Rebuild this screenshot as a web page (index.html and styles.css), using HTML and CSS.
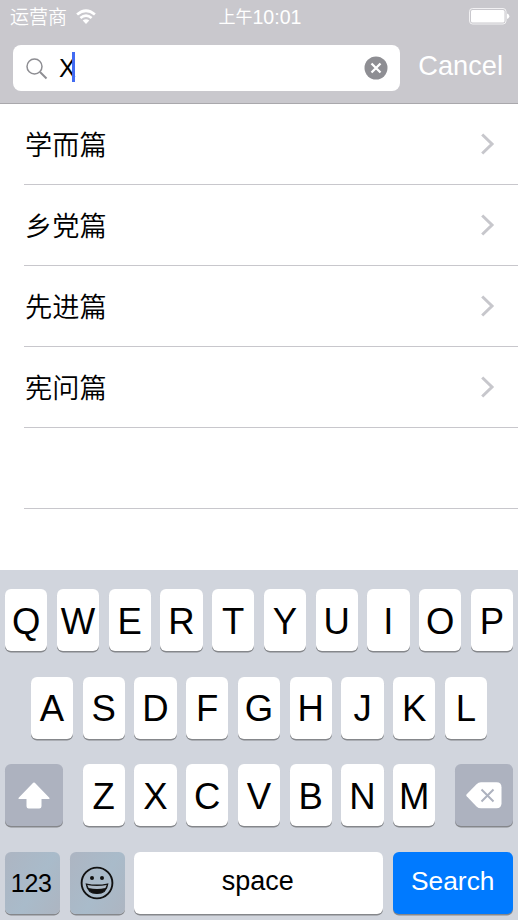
FILE: index.html
```html
<!DOCTYPE html>
<html lang="zh-CN">
<head>
<meta charset="utf-8">
<title>论语</title>
<link rel="stylesheet" href="styles.css">
</head>
<body>
<main class="phone">
  <header class="header">
    <div class="status">
      <div class="carrier"><span>运营商</span>
        <svg class="wifi" width="20" height="16" viewBox="0 0 20 16"><path d="M1.1 5.6Q10-2.1 18.9 5.6M4.4 9Q10 4.2 15.6 9" fill="none" stroke="#fff" stroke-width="2.7"/><path d="M6.700 11.500Q10 8.800 13.300 11.500L10 15Z" fill="#fff"/></svg>
      </div>
      <div class="time"><span class="meridiem">上午</span>10:01</div>
      <svg class="battery" width="41" height="17" viewBox="0 0 41 17"><rect x=".5" y=".5" width="36.500" height="15.500" rx="3" fill="none" stroke="#fff" stroke-opacity=".75"/><rect x="2" y="2" width="33.500" height="12.500" rx="1.500" fill="#fff"/><path d="M38 5.500q2.300.7 2.300 2.800T38 11Z" fill="#fff"/></svg>
    </div>
    <div class="search-row">
      <div class="field">
        <svg class="glass" width="22" height="22" viewBox="0 0 22 22" fill="none" stroke="#8e8e93"><circle cx="8.500" cy="8.500" r="7.500" stroke-width="1.500"/><path d="M14 14l6.500 6.500" stroke-width="2"/></svg>
        <span class="query">X</span><i class="caret"></i>
        <svg class="clear" width="24" height="24" viewBox="0 0 24 24"><circle cx="12" cy="12" r="11.500" fill="#8e8e93"/><path d="M7.500 7.500l9 9M16.500 7.500l-9 9" stroke="#fff" stroke-width="2.300"/></svg>
      </div>
      <span class="cancel">Cancel</span>
    </div>
  </header>
  <ul class="list">
    <li class="row"><span>学而篇</span><svg class="chevron" width="14" height="22" viewBox="0 0 14 22"><path d="M1.200 1.500L11 11l-9.800 9.500"/></svg></li>
    <li class="row"><span>乡党篇</span><svg class="chevron" width="14" height="22" viewBox="0 0 14 22"><path d="M1.200 1.500L11 11l-9.800 9.500"/></svg></li>
    <li class="row"><span>先进篇</span><svg class="chevron" width="14" height="22" viewBox="0 0 14 22"><path d="M1.200 1.500L11 11l-9.800 9.500"/></svg></li>
    <li class="row"><span>宪问篇</span><svg class="chevron" width="14" height="22" viewBox="0 0 14 22"><path d="M1.200 1.500L11 11l-9.800 9.500"/></svg></li>
    <li class="row"></li>
  </ul>
  <section class="keyboard">
    <div class="keys">
      <b class="key">Q</b><b class="key">W</b><b class="key">E</b><b class="key">R</b><b class="key">T</b><b class="key">Y</b><b class="key">U</b><b class="key">I</b><b class="key">O</b><b class="key">P</b>
    </div>
    <div class="keys">
      <b class="key">A</b><b class="key">S</b><b class="key">D</b><b class="key">F</b><b class="key">G</b><b class="key">H</b><b class="key">J</b><b class="key">K</b><b class="key">L</b>
    </div>
    <div class="keys keys-wide">
      <b class="key dark"><svg width="32" height="27" viewBox="0 0 32 27"><path d="M15.200.8q.8-.8 1.600 0L31.300 15.800q.9 1.200-.5 1.200H23.500v7.300q0 2.200-2.200 2.200H10.700Q8.500 26.500 8.500 24.300v-7.300H1.200q-1.400 0-.5-1.200Z" fill="#fff"/></svg></b>
      <div class="letters"><b class="key">Z</b><b class="key">X</b><b class="key">C</b><b class="key">V</b><b class="key">B</b><b class="key">N</b><b class="key">M</b></div>
      <b class="key dark"><svg width="36" height="27" viewBox="0 0 36 27"><path d="M.7 12.300L10.500 2.200Q12.400.3 15 .3h15.500q5 0 5 5v16q0 5-5 5H15q-2.600 0-4.500-1.900L.7 14.300q-.9-1 0-2Z" fill="#fff"/><path d="M15.500 7.500l12 12M27.500 7.500l-12 12" stroke="#adb2bf" stroke-width="2"/></svg></b>
    </div>
    <div class="keys">
      <b class="key small tint numbers">123</b>
      <b class="key small tint"><svg width="34" height="34" viewBox="0 0 34 34"><circle cx="17" cy="17" r="15.400" fill="none" stroke="#111" stroke-width="1.900"/><circle cx="12" cy="12" r="2" fill="#111"/><circle cx="22" cy="12" r="2" fill="#111"/><path d="M6.300 18Q17 20.400 27.700 18Q26.500 27.500 17 27.500T6.300 18Z" fill="#111" stroke="#111" stroke-width="1.200"/><path d="M7.300 19Q17 21.200 26.700 19L25.400 22Q17 24 8.600 22Z" fill="#adbac7"/></svg></b>
      <b class="key space">space</b>
      <b class="key go">Search</b>
    </div>
  </section>
</main>
</body>
</html>
```
FILE: styles.css
```css
* { box-sizing: border-box; }
body { margin: 0; font-family: "Liberation Sans", "Noto Sans CJK SC", sans-serif; color: #000; }
svg { display: block; flex: none; }
.phone { display: flex; flex-direction: column; width: 518px; height: 920px; overflow: hidden; background: #fff; }
.header { height: 104px; background: #c9c8cd; border-bottom: 1px solid #a9a8ac; color: #fff; }
.status { display: grid; grid-template-columns: 1fr auto 1fr; align-items: center; height: 33px; padding: 0 8px 0 10px; }
.carrier { display: flex; align-items: center; gap: 9px; font: 350 19px/32px "Noto Sans CJK SC", sans-serif; }
.carrier span { margin-top: -2px; }
.time { display: flex; align-items: center; font-size: 19.600px; line-height: 32px; }
.meridiem { margin-top: -1px; font: 400 17px/32px "Noto Sans CJK SC", sans-serif; }
.battery { justify-self: end; }
.search-row { display: flex; align-items: center; padding: 12px 15px 0 13px; justify-content: space-between; }
.field { display: flex; align-items: center; width: 387px; height: 46px; padding: 0 12px 0 13px; border-radius: 8px; background: #fff; color: #000; }
.glass { margin-top: 1px; }
.query { width: 13px; margin-left: 11px; font-size: 25px; }
.caret { z-index: 1; width: 3px; height: 30px; margin-top: -2px; background: #426bf2; }
.clear { margin-left: auto; }
.cancel { font-size: 27.200px; line-height: 32px; margin-top: -4px; }
.list { margin: 0; padding: 0; list-style: none; height: 466px; }
.row { display: flex; align-items: center; justify-content: space-between; height: 81px; margin-left: 24px; padding: 0 23px 0 1px; border-bottom: 1px solid #c8c7cc; font: 350 27.200px/40px "Noto Sans CJK SC", sans-serif; }
.row span { margin-top: -3px; }
.chevron { margin-top: -1px; fill: none; stroke: #c7c7cc; stroke-width: 3; }
.keyboard { display: flex; flex-direction: column; gap: 25.500px; height: 350px; padding: 19.300px 5px 0; background: #d1d5dd; }
.keys, .letters { display: flex; justify-content: center; gap: 9.500px; }
.keys-wide { justify-content: space-between; }
.key { display: flex; align-items: center; justify-content: center; width: 42.250px; height: 62px; padding-top: 3px; border-radius: 6px; background: #fff; box-shadow: 0 1.500px 0 #85878b; font-size: 36.500px; font-weight: 400; }
.dark { width: 58px; padding-top: 0; background: #adb2bf; }
.small { width: 55px; padding-top: 0; font-size: 25px; }
.tint { background: linear-gradient(120deg, #adb5c2, #a9bbca 55%, #adb5c1); }
.numbers { padding: 2px 3px 0 0; letter-spacing: -.3px; }
.space { width: 249px; padding: 0 2px 2px 0; font-size: 27px; }
.go { width: 120px; font-size: 26.300px; padding: 0 0 2px; color: #fff; background: #007aff; }
```
